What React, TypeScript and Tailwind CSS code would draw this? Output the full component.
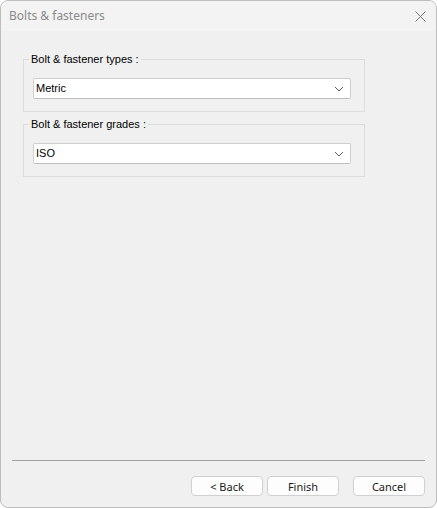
function Chevron() {
  return (
    <svg width="10" height="6" viewBox="0 0 10 6" className="shrink-0">
      <path d="M1 1 L5 5 L9 1" fill="none" stroke="#5f5f5f" strokeWidth="1" />
    </svg>
  )
}

function GroupBox({ label, value }: { label: string; value: string }) {
  return (
    <fieldset className="w-[342px] border border-[#dcdcdc] pl-[9px] pr-[13px] pb-[12px] pt-[12px]">
      <legend className="-ml-[4px] px-[2px] text-[11px] leading-[13px] text-black">{label}</legend>
      <div className="flex h-[21px] items-center justify-between rounded-[2px] border border-[#cfcfcf] border-b-[#bdbdbd] bg-white pl-[2px] pr-[6px] text-[11px] text-black">
        <span>{value}</span>
        <Chevron />
      </div>
    </fieldset>
  )
}

function Button({ children }: { children: string }) {
  return (
    <button
      type="button"
      className="flex h-[20px] w-[72px] items-center justify-center rounded-[4px] border border-[#d0d0d0] bg-[#fdfdfd] text-[11px] leading-none text-[#1a1a1a] font-['Noto_Sans',sans-serif]"
    >
      {children}
    </button>
  )
}

export default function App() {
  return (
    <div className="flex h-[508px] w-[437px] flex-col overflow-hidden rounded-[8px] border border-[#bdbdbd] bg-[#f0f0f0] font-['Liberation_Sans',sans-serif]">
      <div className="flex h-[30px] shrink-0 items-center justify-between bg-[#f3f3f3] pl-[8px] pr-[10px]">
        <span className="text-[12px] text-[#8a8a8a] font-['Noto_Sans',sans-serif]">Bolts &amp; fasteners</span>
        <svg width="11" height="11" viewBox="0 0 11 11">
          <path d="M0.5 0.5 L10.5 10.5 M10.5 0.5 L0.5 10.5" stroke="#7a7a7a" strokeWidth="1" />
        </svg>
      </div>
      <div className="flex flex-col gap-[6px] pl-[22px] pt-[22px]">
        <GroupBox label="Bolt & fastener types :" value="Metric" />
        <GroupBox label="Bolt & fastener grades :" value="ISO" />
      </div>
      <div className="flex-1" />
      <div className="mx-[11px] h-px bg-[#a0a0a0]" />
      <div className="flex items-center justify-end pb-[11px] pr-[11px] pt-[15px]">
        <div className="flex gap-[4px]">
          <Button>&lt; Back</Button>
          <Button>Finish</Button>
        </div>
        <div className="ml-[14px] flex">
          <Button>Cancel</Button>
        </div>
      </div>
    </div>
  )
}
